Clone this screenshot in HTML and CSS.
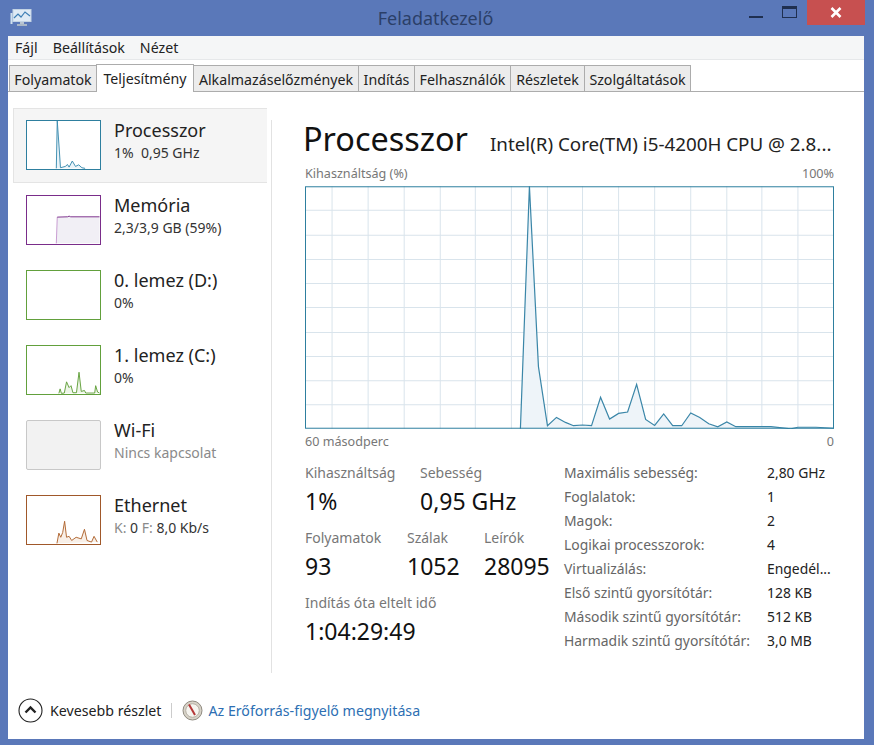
FILE: index.html
```html
<!DOCTYPE html>
<html lang="hu">
<head>
<meta charset="utf-8">
<title>Feladatkezelő</title>
<link rel="stylesheet" href="styles.css">
</head>
<body>
<header class="titlebar">
  <svg class="app-icon" width="22" height="20" viewBox="0 0 22 20">
    <rect x="3" y="1.5" width="18" height="12" fill="#dfeaf5" stroke="#c3d3e4"/>
    <polyline points="4,10 8,6 11,9 15,4 20,8" fill="none" stroke="#3f7fb5" stroke-width="1.2"/>
    <rect x="0.5" y="5" width="2" height="11" fill="#cfe0ee"/>
    <rect x="10" y="14" width="4" height="2" fill="#b7c4d2"/>
    <rect x="7" y="16" width="10" height="2" fill="#a9b7c7"/>
  </svg>
  <div class="title">Feladatkezelő</div>
  <div class="controls">
    <span class="ctl-min"></span>
    <span class="ctl-max"></span>
    <span class="ctl-close">
      <svg width="12" height="11" viewBox="0 0 12 11"><path d="M1.5 1 L10.5 10 M10.5 1 L1.5 10" stroke="#fff" stroke-width="2.6"/></svg>
    </span>
  </div>
</header>
<main class="window">
  <nav class="menu"><span>Fájl</span><span>Beállítások</span><span>Nézet</span></nav>
  <div class="tabs">
    <span class="tab t1">Folyamatok</span>
    <span class="tab active">Teljesítmény</span>
    <span class="tab t3">Alkalmazáselőzmények</span>
    <span class="tab t4">Indítás</span>
    <span class="tab t5">Felhasználók</span>
    <span class="tab t6">Részletek</span>
    <span class="tab t7">Szolgáltatások</span>
  </div>
  <div class="content">
    <aside class="side">
      <div class="item selected">
        <svg class="mini cpu" viewBox="0 0 225 150"><polyline class="f" points="90,148 93,0 100,100 103,146 118,142 125,136 130,144 140,125 150,142 160,137 170,146 180,148"/></svg>
        <div class="info"><div class="name">Processzor</div><div class="sub">1%&nbsp; 0,95 GHz</div></div>
      </div>
      <div class="item">
        <svg class="mini mem" viewBox="0 0 225 150">
          <polygon class="f" points="90,148 93,66 125,65 130,63 135,65 225,65 225,148"/>
          <polyline class="edge" points="90,148 93,66"/>
          <polyline class="cap" points="93,66 125,65 130,63 135,65 225,65"/>
        </svg>
        <div class="info"><div class="name">Memória</div><div class="sub">2,3/3,9 GB (59%)</div></div>
      </div>
      <div class="item">
        <svg class="mini disk" viewBox="0 0 225 150"></svg>
        <div class="info"><div class="name">0. lemez (D:)</div><div class="sub">0%</div></div>
      </div>
      <div class="item">
        <svg class="mini disk" viewBox="0 0 225 150"><polyline class="f" points="98,148 102,134 106,148 115,147 122,112 130,130 136,124 142,146 153,146 161,82 168,142 178,139 182,147 210,147 213,124 219,144 225,147"/></svg>
        <div class="info"><div class="name">1. lemez (C:)</div><div class="sub">0%</div></div>
      </div>
      <div class="item">
        <div class="mini wifi"></div>
        <div class="info"><div class="name">Wi-Fi</div><div class="sub muted">Nincs kapcsolat</div></div>
      </div>
      <div class="item">
        <svg class="mini eth" viewBox="0 0 225 150"><polyline class="f" points="92,148 98,116 104,129 110,114 116,79 122,129 130,126 138,139 152,129 168,134 178,104 186,139 200,144 208,126 218,144"/></svg>
        <div class="info"><div class="name">Ethernet</div><div class="sub"><span class="dim">K:</span> 0 <span class="dim">F:</span> 8,0 Kb/s</div></div>
      </div>
    </aside>
    <section class="panel">
      <div class="head"><h1>Processzor</h1><div class="cpu-name">Intel(R) Core(TM) i5-4200H CPU @ 2.8...</div></div>
      <div class="axis top"><span>Kihasználtság (%)</span><span>100%</span></div>
      <svg class="graph" viewBox="0 0 528 242" width="529" height="243">
        <g class="grid">
          <path d="M27 0V242M63 0V242M99 0V242M135 0V242M170 0V242M206 0V242M242 0V242M277 0V242M313 0V242M349 0V242M385 0V242M421 0V242M456 0V242M492 0V242"/>
          <path d="M0 24H528M0 49H528M0 73H528M0 97H528M0 121H528M0 146H528M0 170H528M0 194H528M0 218H528"/>
        </g>
        <polygon class="area" points="215,242 224,0 233,180 242,239 251,230.700 260,235.700 268,239 277,238.300 286,239 295,210.700 304,232.300 313,226.700 322,225.300 331,197.700 340,232.700 349,238.700 358,227.300 367,239 376,239 385,226.300 394,230.700 403,237 412,240 421,235.300 430,240 465,240 485,242 492,240.500 510,240.500 528,241.500 528,242"/>
        <polyline class="line" points="215,242 224,0 233,180 242,239 251,230.700 260,235.700 268,239 277,238.300 286,239 295,210.700 304,232.300 313,226.700 322,225.300 331,197.700 340,232.700 349,238.700 358,227.300 367,239 376,239 385,226.300 394,230.700 403,237 412,240 421,235.300 430,240 465,240 485,242 492,240.500 510,240.500 528,241.500"/>
        <rect class="frame" x="0.500" y="0.500" width="527" height="241"/>
      </svg>
      <div class="axis bottom"><span>60 másodperc</span><span>0</span></div>
      <div class="details">
        <div class="stats">
          <div class="stat-row">
            <div class="stat s1"><div class="label">Kihasználtság</div><div class="value">1%</div></div>
            <div class="stat"><div class="label">Sebesség</div><div class="value">0,95 GHz</div></div>
          </div>
          <div class="stat-row">
            <div class="stat s2"><div class="label">Folyamatok</div><div class="value">93</div></div>
            <div class="stat s3"><div class="label">Szálak</div><div class="value">1052</div></div>
            <div class="stat"><div class="label">Leírók</div><div class="value">28095</div></div>
          </div>
          <div class="stat-row">
            <div class="stat"><div class="label">Indítás óta eltelt idő</div><div class="value">1:04:29:49</div></div>
          </div>
        </div>
        <dl class="specs">
          <dt>Maximális sebesség:</dt><dd>2,80 GHz</dd>
          <dt>Foglalatok:</dt><dd>1</dd>
          <dt>Magok:</dt><dd>2</dd>
          <dt>Logikai processzorok:</dt><dd>4</dd>
          <dt>Virtualizálás:</dt><dd>Engedél...</dd>
          <dt>Első szintű gyorsítótár:</dt><dd>128 KB</dd>
          <dt>Második szintű gyorsítótár:</dt><dd>512 KB</dd>
          <dt>Harmadik szintű gyorsítótár:</dt><dd>3,0 MB</dd>
        </dl>
      </div>
    </section>
  </div>
  <footer class="footer">
    <svg class="less" width="25" height="25" viewBox="0 0 25 25">
      <circle cx="12.500" cy="12.500" r="11.500" fill="#fff" stroke="#222" stroke-width="1.100"/>
      <path d="M7.500 14.500 L12.500 9.500 L17.500 14.500" fill="none" stroke="#222" stroke-width="2.400"/>
    </svg>
    <span class="less-text">Kevesebb részlet</span>
    <span class="sep"></span>
    <svg class="res" width="21" height="21" viewBox="0 0 21 21">
      <circle cx="10.500" cy="10.500" r="9.500" fill="#d8d3c8" stroke="#8f8a80"/>
      <circle cx="10.500" cy="10.500" r="6.800" fill="#f6f4ef" stroke="#b5b0a5"/>
      <path d="M7 4.500 L13 15" stroke="#b53737" stroke-width="2"/>
    </svg>
    <span class="link">Az Erőforrás-figyelő megnyitása</span>
  </footer>
</main>
</body>
</html>
```
FILE: styles.css
```css
* { box-sizing: border-box; }
html, body { margin: 0; height: 745px; overflow: hidden; }
body {
  background: #5a78b9;
  font-family: "Noto Sans", "Open Sans", "Liberation Sans", sans-serif;
  font-size: 14px;
  color: #222;
}
.titlebar {
  height: 36px;
  display: grid;
  grid-template-columns: 1fr auto 1fr;
  padding: 0 9px 0 6px;
}
.app-icon { margin: 8px 0 0 4px; }
.title { font-size: 18px; line-height: 36px; color: #2b3f68; }
.controls { justify-self: end; display: flex; align-items: flex-start; height: 25px; }
.ctl-min { width: 14px; height: 2px; background: #1f2f50; margin: 16px 19px 0 0; }
.ctl-max { width: 15px; height: 12px; border: 1px solid #1f2f50; border-top-width: 3px; margin: 6px 10px 0 0; }
.ctl-close { width: 58px; height: 25px; background: #c75050; display: flex; align-items: center; justify-content: center; }
.window {
  margin-left: 8px;
  width: 856px;
  height: 703px;
  background: #fff;
  display: flex;
  flex-direction: column;
}
.menu {
  height: 24px;
  background: #f5f6f7;
  border-bottom: 1px solid #e6e8ea;
  display: flex;
  gap: 15px;
  padding-left: 7px;
  line-height: 24px;
  font-size: 14.200px;
}
.tabs {
  height: 32px;
  display: flex;
  align-items: flex-end;
  padding-left: 2px;
  border-bottom: 1px solid #acacac;
  font-size: 14.200px;
}
.tab {
  height: 26px;
  line-height: 28px;
  background: #ececec;
  border: 1px solid #acacac;
  border-bottom: 0;
  margin-left: -1px;
  text-align: center;
  white-space: nowrap;
  overflow: hidden;
}
.t1 { width: 88px; }
.active { width: 98px; height: 28px; background: #fff; position: relative; top: 1px; line-height: 27px; }
.t3 { width: 166px; }
.t4 { width: 57px; }
.t5 { width: 97px; }
.t6 { width: 75px; }
.t7 { width: 107px; }
.content { flex: 1; display: flex; min-height: 0; }
.side {
  width: 256px;
  margin-top: 16px;
  margin-left: 5px;
  flex: none;
}
.item { height: 75px; display: flex; padding: 11px 0 0 12px; gap: 13px; border: 1px solid transparent; }
.selected { width: 254px; background: #f5f5f5; border-color: #e4e4e4; border-width: 1px 0 1px 1px; }
.mini { width: 75px; height: 50px; display: block; flex: none; border: 1px solid; background: #fff; }
.mini .f { stroke-width: 3; }
.cpu { border-color: #2e7f9f; }
.cpu .f { fill: #eaf4f9; stroke: #3c8cb0; }
.mem { border-color: #7a2d8a; }
.mem .f { fill: #f1eff5; stroke: none; }
.mem .edge { fill: none; stroke: #c79ad0; stroke-width: 3; }
.mem .cap { fill: none; stroke: #7a2d8a; stroke-width: 3; }
.disk { border-color: #62a03c; }
.disk .f { fill: #eef6e8; stroke: #62a03c; }
.eth { border-color: #a0582a; }
.eth .f { fill: #f8efe7; stroke: #b06530; }
.wifi { background: #f2f2f2; border-color: #c8c8c8; border-radius: 2px; }
.info { margin-top: -3px; }
.name { font-size: 18px; line-height: 26px; color: #222; }
.sub { font-size: 14px; line-height: 20px; color: #333; }
.muted, .dim { color: #8a8a8a; }
.panel { margin-left: 2px; padding-left: 33px; flex: 1; border-left: 1px solid #e2e2e2; margin-top: 28px; margin-bottom: 12px; min-width: 0; }
.head { display: flex; align-items: baseline; margin-top: -3px; height: 49px; white-space: nowrap; }
h1 { margin: 0 22px 0 -2px; font-size: 32.400px; font-weight: 400; line-height: 42px; color: #111; }
.cpu-name { font-size: 18.800px; }
.axis { width: 529px; display: flex; justify-content: space-between; font-size: 12.600px; color: #777; line-height: 16px; }
.top { margin-top: 0; margin-bottom: 4px; }
.bottom { margin-top: 5px; }
.graph { display: block; }
.grid path { stroke: #d9e4ec; stroke-width: 1; fill: none; }
.area { fill: #eef4f9; }
.line { fill: none; stroke: #3a86a8; stroke-width: 1.200; }
.frame { fill: none; stroke: #2e7f9f; stroke-width: 1; }
.details { display: flex; margin-top: 14px; }
.stats { width: 259px; flex: none; }
.stat-row { display: flex; height: 65px; }
.s1 { width: 115px; }
.s2 { width: 102px; }
.s3 { width: 77px; }
.label { font-size: 14px; line-height: 18px; color: #777; white-space: nowrap; }
.value { font-size: 23px; line-height: 38px; color: #111; white-space: nowrap; }
.specs { display: grid; grid-template-columns: 203px 70px; grid-auto-rows: 24px; margin: 0; font-size: 13.900px; line-height: 18px; }
.specs dt { color: #666; white-space: nowrap; }
.specs dd { margin: 0; color: #222; white-space: nowrap; }
.footer { height: 54px; display: flex; align-items: center; padding: 0 0 4px 10px; flex: none; font-size: 14.200px; }
.less-text { margin-left: 7px; }
.sep { width: 1px; height: 15px; background: #ccc; margin: 0 10px; }
.link { color: #2d6fb3; margin-left: 5px; }
```
